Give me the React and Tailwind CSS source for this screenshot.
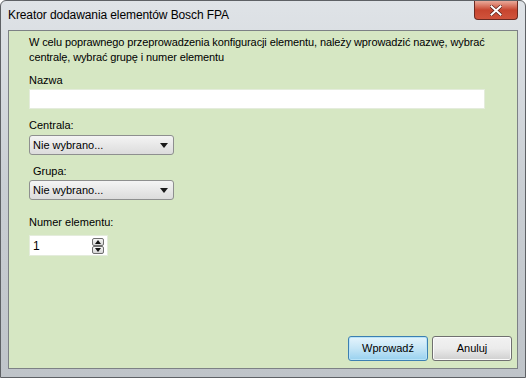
const font = { fontFamily: "'Liberation Sans', Arial, sans-serif" };

function Select() {
  return (
    <div className="flex h-[20px] w-[145px] items-center justify-between rounded-[3px] border border-[#8e8f8f] bg-gradient-to-b from-[#f4f4f4] to-[#dcdcdc] pl-[3px] pr-[5px] text-[11px] text-black">
      <span>Nie wybrano...</span>
      <svg width="8" height="5" viewBox="0 0 8 5">
        <path d="M0 0H8L4 5Z" fill="#1a1a1a" />
      </svg>
    </div>
  );
}

function SpinArrow({ up }) {
  return (
    <div className="flex h-[8px] w-[12px] items-center justify-center rounded-[2px] border border-[#6f6f6f] bg-gradient-to-b from-[#f6f6f6] to-[#d6d6d6]">
      <svg width="6" height="4" viewBox="0 0 6 4">
        {up ? <path d="M0 4H6L3 0Z" fill="#111" /> : <path d="M0 0H6L3 4Z" fill="#111" />}
      </svg>
    </div>
  );
}

export default function App() {
  return (
    <div
      className="flex h-[378px] w-[526px] flex-col overflow-hidden rounded-t-[6px] border border-[#5e6165] bg-gradient-to-b from-[#dfe3e7] via-[#c9ced3] to-[#bfc4c9]"
      style={font}
    >
      {/* Title bar */}
      <div className="flex h-[29px] shrink-0 items-start justify-between">
        <span className="pl-[7px] pt-[7px] text-[12px] leading-[15px] tracking-[-0.1px] text-black">
          Kreator dodawania elementów Bosch FPA
        </span>
        <div className="mr-[7px] flex h-[19px] w-[44px] items-center justify-center rounded-b-[4px] border border-t-0 border-[#6b2a22] bg-gradient-to-b from-[#e9a99a] via-[#c7452f] to-[#d0533c]">
          <svg width="12" height="11" viewBox="0 0 12 11">
            <path d="M1.5 1.5L10.5 9.5M10.5 1.5L1.5 9.5" stroke="#5a2018" strokeWidth="3.4" strokeLinecap="square" />
            <path d="M1.5 1.5L10.5 9.5M10.5 1.5L1.5 9.5" stroke="#ffffff" strokeWidth="2" strokeLinecap="square" />
          </svg>
        </div>
      </div>

      {/* Client area */}
      <div className="mx-[7px] flex flex-1 flex-col border border-[#7d8185] bg-[#d6e7c3] pl-[20px] pr-[5px] pb-[7px] text-[11px] text-black">
        <p className="pt-[4px] leading-[15px] tracking-[-0.11px] whitespace-nowrap">
          W celu poprawnego przeprowadzenia konfiguracji elementu, należy wprowadzić nazwę, wybrać
          <br />
          centralę, wybrać grupę i numer elementu
        </p>

        <div className="mt-[8px] leading-[14px]">Nazwa</div>
        <div className="mt-[2px] h-[20px] w-[456px] border border-[#e4ecdc] bg-white" />

        <div className="mt-[9px] leading-[14px]">Centrala:</div>
        <div className="mt-[3px]">
          <Select />
        </div>

        <div className="mt-[9px] pl-[4px] leading-[14px]">Grupa:</div>
        <div className="mt-[2px]">
          <Select />
        </div>

        <div className="mt-[15px] leading-[14px]">Numer elementu:</div>
        <div className="mt-[6px] flex h-[21px] w-[79px] items-center justify-between border border-[#e4ecdc] bg-white pl-[3px] pr-[3px]">
          <span className="text-[12px]">1</span>
          <div className="flex flex-col">
            <SpinArrow up />
            <SpinArrow />
          </div>
        </div>

        <div className="flex-1" />

        <div className="flex justify-end gap-[4px]">
          <button className="h-[25px] w-[80px] rounded-[3px] border border-[#3c7fb1] bg-gradient-to-b from-[#e5f4fc] via-[#c4e5f6] to-[#98d1ef] text-[11px] text-black shadow-[inset_0_0_0_1px_#b8e3f8]">
            Wprowadź
          </button>
          <button className="h-[25px] w-[80px] rounded-[3px] border border-[#707070] bg-gradient-to-b from-[#f2f2f2] via-[#ebebeb] to-[#cfcfcf] text-[11px] text-black shadow-[inset_0_0_0_1px_#fbfbfb]">
            Anuluj
          </button>
        </div>
      </div>

      <div className="h-[8px] shrink-0" />
    </div>
  );
}
